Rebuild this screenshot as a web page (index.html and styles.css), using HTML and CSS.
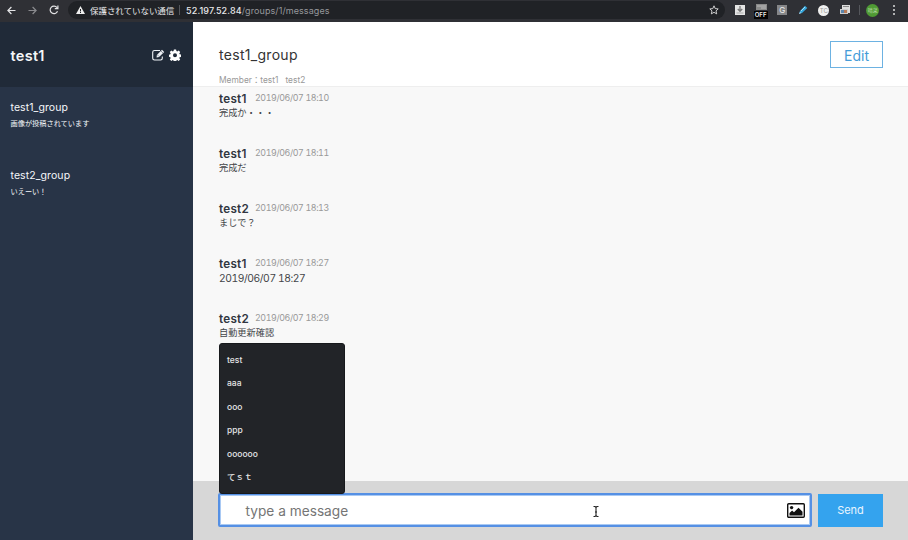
FILE: index.html
```
<!DOCTYPE html>
<html lang="ja">
<head>
<meta charset="utf-8">
<title>test1_group</title>
<link rel="stylesheet" href="styles.css">
</head>
<body>
<header class="browser">
  <div class="nav">
    <svg width="9" height="9" viewBox="0 0 9 9"><path d="M8.5 4.5H1M4.4 1L.9 4.5 4.4 8" class="line"/></svg>
    <svg width="9" height="9" viewBox="0 0 9 9" class="dim"><path d="M.5 4.5H8M4.6 1l3.5 3.5L4.6 8" class="line"/></svg>
    <svg width="10" height="10" viewBox="0 0 10 10"><path d="M8.5 6.2A3.8 3.8 0 1 1 8 2.6M8.9.6v3H5.8" class="line"/></svg>
  </div>
  <div class="address">
    <svg width="9" height="8" viewBox="0 0 9 8"><path d="M4.5 0L9 8H0z" fill="#eee"/><path d="M4.5 3v2.4M4.5 6v1" stroke="#202226"/></svg>
    <span class="insecure">保護されていない通信</span>
    <span class="bar"></span>
    <span class="url"><b>52.197.52.84</b>/groups/1/messages</span>
    <svg class="star" width="10" height="10" viewBox="0 0 10 10"><path d="M5 .8l1.2 2.8 3 .3L7 5.9l.7 3L5 7.3 2.3 8.9l.7-3L.8 3.9l3-.3z" fill="none" stroke="#ddd" stroke-width=".9"/></svg>
  </div>
  <div class="extensions">
    <svg width="10" height="10" viewBox="0 0 10 10"><path d="M0 0h10v10H0z" fill="#e4e4e4"/><path d="M5 1v5M2.8 4L5 6.3 7.2 4" fill="none" stroke="#777" stroke-width="1.3"/><path d="M1.5 8h7" stroke="#aaa"/></svg>
    <span class="toggle"><svg width="11" height="6" viewBox="0 0 11 6"><path d="M0 0h11v6H0z" fill="#8a8a8a"/><path d="M1 2h9M5 4h5" stroke="#bbb"/></svg><span class="off">OFF</span></span>
    <span class="g-tile">G</span>
    <svg width="10" height="10" viewBox="0 0 10 10"><path d="M1 9l1-3 5-5.2L9.3 3 4 8z" fill="#36a6dc"/><path d="M3 6l4-4" stroke="#a2e1fa"/><path d="M1 9l1-2 1 1z" fill="#ddd"/></svg>
    <span class="tc-dot">TC</span>
    <svg width="10" height="10" viewBox="0 0 10 10"><path d="M2 0h8v8H2z" fill="#ddd"/><path d="M3 1h6v1H3z" fill="#888"/><path d="M0 4h8v5H0z" fill="#ccc"/><path d="M1 5h3v3H1z" fill="#5b86ad"/><path d="M4 5h3v3H4z" fill="#b77955"/></svg>
    <span class="bar"></span>
    <span class="avatar">晴菜</span>
    <span class="dots"><i></i><i></i><i></i></span>
  </div>
</header>
<div class="app">
  <aside class="sidebar">
    <div class="user">
      <span class="user-name">test1</span>
      <svg class="compose" width="13" height="12" viewBox="0 0 13 12"><path d="M8 1.5H2.5Q.7 1.5.7 3.2v6.1Q.7 11 2.5 11h6.1q1.7 0 1.7-1.7V7.4" fill="none" stroke="#eef1f5" stroke-width="1.1"/><path d="M4.6 8.4l.3-2.5L10 .8l2.2 2.1-5.1 5.2z" fill="#eef1f5"/><path d="M5.7 6.2l1.2 1.2M9 2.1l1.8 1.8" stroke="#202b3a" stroke-width=".6"/></svg>
      <svg width="12" height="12" viewBox="0 0 24 24"><path fill="#fff" fill-rule="evenodd" d="M9.8 1h4.4l.6 3.1 1.8.8 2.7-1.8 3.1 3.1-1.8 2.7.7 1.7 3.2.7v4.4l-3.2.6-.7 1.8 1.8 2.7-3.1 3.1-2.7-1.8-1.8.7-.6 3.2H9.8l-.7-3.2-1.7-.7-2.7 1.8-3.1-3.1 1.8-2.7-.8-1.8L0 15.7V11.3l2.6-.7.8-1.7-1.8-2.7 3.1-3.1 2.7 1.8 1.7-.8zM12 8.5a4 4 0 1 0 0 8 4 4 0 0 0 0-8z"/></svg>
    </div>
    <div class="groups">
      <div class="group"><div class="group-name">test1_group</div><div class="group-last">画像が投稿されています</div></div>
      <div class="group"><div class="group-name">test2_group</div><div class="group-last">いえーい！</div></div>
    </div>
  </aside>
  <main class="chat">
    <div class="chat-head">
      <div>
        <div class="title">test1_group</div>
        <div class="members">Member：test1<span>test2</span></div>
      </div>
      <div class="edit">Edit</div>
    </div>
    <div class="messages">
      <div class="message"><div class="meta"><span class="who">test1</span><span class="date">2019/06/07 18:10</span></div><div class="text">完成か・・・</div></div>
      <div class="message"><div class="meta"><span class="who">test1</span><span class="date">2019/06/07 18:11</span></div><div class="text">完成だ</div></div>
      <div class="message"><div class="meta"><span class="who">test2</span><span class="date">2019/06/07 18:13</span></div><div class="text">まじで？</div></div>
      <div class="message"><div class="meta"><span class="who">test1</span><span class="date">2019/06/07 18:27</span></div><div class="text latin">2019/06/07 18:27</div></div>
      <div class="message"><div class="meta"><span class="who">test2</span><span class="date">2019/06/07 18:29</span></div><div class="text">自動更新確認</div></div>
    </div>
    <div class="form">
      <div class="field">
        <span class="placeholder">type a message</span>
        <svg class="image" width="18" height="15" viewBox="0 0 18 15"><rect x=".7" y=".7" width="16.6" height="13.6" rx="1" fill="none" stroke="#111" stroke-width="1.4"/><circle cx="4.6" cy="4.6" r="1.7" fill="#111"/><path d="M2.5 12.5V10l2.6-2.5L7 9.3l4.5-4.6 4 4v3.8z" fill="#111"/></svg>
        <div class="suggestions"><div>test</div><div>aaa</div><div>ooo</div><div>ppp</div><div>oooooo</div><div>てｓｔ</div></div>
        <svg class="cursor" width="6" height="11" viewBox="0 0 6 11"><path d="M.5.5H2L3 1.5 4 .5h1.5M3 1.5v8M.5 10.5H2l1-1 1 1h1.5M2 6h2" fill="none" stroke="#222" stroke-width="1.1"/></svg>
      </div>
      <div class="send">Send</div>
    </div>
  </main>
</div>
</body>
</html>
```
FILE: styles.css
```
* { box-sizing: border-box; }
body {
  margin: 0;
  width: 908px;
  height: 540px;
  overflow: hidden;
  display: flex;
  flex-direction: column;
  font-family: Inter, "Noto Sans CJK JP", sans-serif;
  white-space: nowrap;
}
svg { display: block; flex: none; }
.browser {
  height: 22px;
  flex: none;
  display: flex;
  align-items: center;
  background: #2f3035;
  padding-bottom: 2px;
}
.line { fill: none; stroke: #e4e4e6; stroke-width: 1.2; }
.dim { opacity: .5; }
.nav { display: flex; align-items: center; gap: 12px; width: 68px; padding-left: 7px; }
.address {
  width: 657px;
  height: 18px;
  display: flex;
  align-items: center;
  background: #202226;
  border-radius: 9px;
  padding: 0 6px 0 8px;
  color: #e8e8ea;
  font-size: 8.5px;
}
.insecure { margin-left: 5px; width: 84px; letter-spacing: -.05px; }
.bar { width: 1px; height: 10px; background: #55575c; }
.address .bar { margin: 0 1px 0 5px; }
.url { color: #96989c; font-size: 9px; letter-spacing: .08px; margin-left: 5px; }
.url b { color: #e8e8ea; font-weight: 500; letter-spacing: .14px; }
.star { margin-left: auto; }
.extensions { display: flex; align-items: center; padding-left: 10px; flex: 1; gap: 10.6px; }
.toggle { width: 11px; height: 16px; position: relative; }
.toggle svg { margin-top: 2px; }
.off {
  position: absolute;
  left: -2px;
  top: 9px;
  width: 14px;
  height: 8px;
  background: #050505;
  color: #eee;
  font-size: 6px;
  line-height: 8px;
  font-weight: 600;
  text-align: center;
}
.g-tile { width: 10px; height: 10px; background: #858688; color: #eee; font-size: 8px; line-height: 10px; text-align: center; }
.tc-dot { width: 11px; height: 11px; border-radius: 50%; background: #f0f0f0; color: #999; font-size: 6px; line-height: 11px; text-align: center; }
.extensions .bar { margin: 0 -5px 0 -2px; }
.avatar { width: 13px; height: 13px; margin-left: 1px; border-radius: 50%; background: #4f9a34; color: #b9dba8; font-size: 5px; line-height: 13px; text-align: center; }
.dots { display: flex; flex-direction: column; gap: 2px; margin-left: 3px; }
.dots i { width: 2px; height: 2px; background: #ddd; border-radius: 50%; }
.app { flex: 1; min-height: 0; display: flex; }
.sidebar { width: 193px; background: #283447; color: #f5f7fa; display: flex; flex-direction: column; }
.user { height: 65px; background: #202a38; display: flex; align-items: center; padding: 1px 12.5px 0 10.5px; }
.user-name { font-size: 14.5px; font-weight: 600; letter-spacing: .3px; }
.compose { margin-left: auto; margin-right: 4px; }
.groups { padding: 13px 10.5px 0; }
.group { height: 68px; }
.group-name { font-size: 10.5px; line-height: 15px; letter-spacing: .08px; }
.group-last { font-size: 7.2px; line-height: 10px; margin-top: 4px; }
.chat { flex: 1; display: flex; flex-direction: column; background: #f8f8f8; color: #333; }
.chat-head {
  height: 65px;
  flex: none;
  background: #fff;
  border-bottom: 1px solid #eee;
  display: flex;
  justify-content: space-between;
  padding: 0 25px 0 26px;
}
.title { font-size: 14px; line-height: 20px; margin-top: 23px; letter-spacing: .3px; }
.members { font-size: 8.4px; line-height: 12px; margin-top: 9px; color: #999; }
.members span { margin-left: 7px; }
.edit {
  width: 53px;
  height: 27px;
  margin-top: 19px;
  border: 1px solid #6db2e2;
  color: #459cd8;
  font-size: 14px;
  line-height: 27px;
  text-align: center;
}
.messages { flex: 1; min-height: 0; padding: 4px 26px 0; }
.message { height: 55px; }
.meta { display: flex; height: 15px; }
.who { width: 36px; font-size: 11.7px; line-height: 17px; font-weight: 600; color: #303640; letter-spacing: .25px; }
.date { font-size: 8.9px; line-height: 13px; color: #999; font-variant-numeric: tabular-nums; letter-spacing: -.4px; }
.text { font-size: 9.2px; line-height: 14px; color: #434548; }
.latin { font-size: 10.3px; line-height: 15px; font-variant-numeric: tabular-nums; letter-spacing: -.42px; }
.form { height: 59px; background: #d7d7d7; display: flex; padding: 12px 25px 0 25px; gap: 6px; }
.field {
  position: relative;
  width: 594px;
  height: 34px;
  background: #fff;
  border: 2px solid #5590e4;
  box-shadow: inset 0 0 0 1px #a9c9f3;
  border-radius: 2px;
  display: flex;
  align-items: center;
  justify-content: space-between;
  padding: 0 5px 0 25.5px;
}
.placeholder { font-size: 13.7px; padding-top: 1px; color: #757575; }
.suggestions {
  position: absolute;
  left: -1px;
  bottom: 31px;
  width: 126px;
  height: 151px;
  padding-top: 5px;
  background: #222428;
  border: 1px solid #17191c;
  border-radius: 3px;
  color: #e4e4e6;
  font-size: 8.5px;
  font-weight: 500;
}
.suggestions div { height: 23.4px; line-height: 22.6px; padding-left: 7px; }
.cursor { position: absolute; left: 373px; top: 11px; }
.send { width: 65px; height: 33px; margin-top: 1px; background: #34a3ee; color: #e9f5fe; font-size: 11px; line-height: 33px; text-align: center; }
```
